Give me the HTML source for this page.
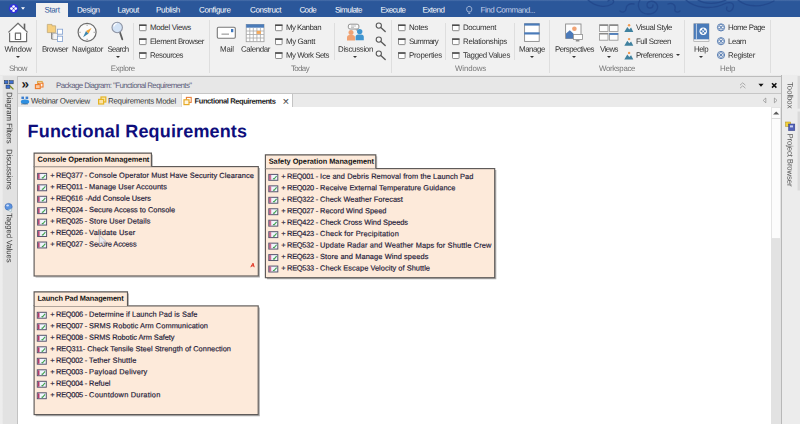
<!DOCTYPE html>
<html><head><meta charset="utf-8"><title>Functional Requirements</title>
<style>
*{box-sizing:border-box;margin:0;padding:0}
html,body{width:800px;height:424px;overflow:hidden;background:#f0f0f0;font-family:"Liberation Sans",sans-serif;}
#root{position:absolute;left:0;top:0;width:800px;height:424px;overflow:hidden;filter:blur(0.4px)}
.abs{position:absolute}
.t{position:absolute;left:0;top:0;transform-origin:0 0;white-space:nowrap;line-height:10px;height:10px}
.tab{font-size:8px;color:#fff}
.rt{font-size:7.9px;color:#333}
.gl{font-size:7.9px;color:#787878}
.hd{font-size:7.9px;color:#60607c}
.dt{font-size:7.9px;color:#3c3c3c}
.dtb{font-size:7.6px;color:#222;font-weight:bold}
.vt{font-size:7.9px;color:#3a3a3a;transform-origin:0 0}
.vr{color:#585858}
.h1{font-size:18px;font-weight:bold;color:#0e0e7c;line-height:20px;height:20px}
.pt{font-size:7.4px;font-weight:bold;color:#111}
.rq{font-size:7.4px;color:#1e1a38;-webkit-text-stroke:.18px #1e1a38}
#titlebar{left:0;top:0;width:800px;height:17px;background:linear-gradient(#4a70ab 0,#2b579a 1.6px)}
#starttab{left:36px;top:3px;width:32px;height:15px;background:#f1f1f1}
#ribbon{left:0;top:17px;width:800px;height:59px;background:linear-gradient(#f1f1f1 0,#f1f1f1 57.4px,#e6e6e6 59px)}
.sep{position:absolute;top:20px;width:1px;height:53px;background:#dedede}
.sep2{position:absolute;top:23px;width:1px;height:37px;background:#dedede}
.win{position:absolute;width:7.6px;height:6.4px;border:.9px solid #7c7c7c;border-top:1.7px solid #505050;background:#fdfdfd;border-radius:.8px}
.arr{position:absolute;width:0;height:0;border-left:2px solid transparent;border-right:2px solid transparent;border-top:2.5px solid #333}
#leftbar{left:0;top:76px;width:18px;height:348px;background:linear-gradient(90deg,#ededed 0,#ededed 2px,#e2e2e2 3.5px);border-right:1px solid #c2c2c2}
#rightbar{left:781px;top:75px;width:19px;height:349px;background:#ececec;border-left:1px solid #b8b8b8}
#dhead{left:18px;top:76px;width:763px;height:18px;background:#e7e7e7;border-top:1px solid #bcbcbc;border-bottom:1px solid #c6c6c6}
#tabrow{left:18px;top:94px;width:763px;height:13px;background:#eaeaea}
#acttab{left:181px;top:94px;width:112px;height:14px;background:#fff;border-right:1px solid #c4c4c4;border-left:1px solid #dadada}
#canvas{left:18px;top:107px;width:753px;height:317px;background:#fff}
#scroll{left:771px;top:107px;width:10px;height:317px;background:#e2e2e2}
#thumb{left:771px;top:107px;width:10px;height:132px;background:#fcfcfc;border:1px solid #e4e4e4}
</style></head><body><div id="root">
<div id="titlebar" class="abs"></div>
<div id="starttab" class="abs"></div>
<div id="ribbon" class="abs"></div>
<div id="leftbar" class="abs"></div>
<div id="rightbar" class="abs"></div>
<div id="dhead" class="abs"></div>
<div id="tabrow" class="abs"></div>
<div id="acttab" class="abs"></div>
<div id="canvas" class="abs"></div>
<div id="scroll" class="abs"></div>
<div id="thumb" class="abs"></div>
<div class="arr" style="left:15.5px;top:55.6px"></div>
<div class="arr" style="left:116px;top:55.6px"></div>
<div class="arr" style="left:353px;top:55.6px"></div>
<div class="arr" style="left:529.5px;top:55.6px"></div>
<div class="arr" style="left:572px;top:55.6px"></div>
<div class="arr" style="left:607px;top:55.6px"></div>
<div class="arr" style="left:699px;top:55.6px"></div>
<div class="arr" style="left:675.5px;top:54px"></div>
<div class="sep" style="left:36px"></div>
<div class="sep" style="left:209px"></div>
<div class="sep" style="left:390.5px"></div>
<div class="sep" style="left:549px"></div>
<div class="sep" style="left:684px"></div>
<div class="sep" style="left:770px"></div>
<div class="sep2" style="left:132.5px"></div>
<div class="sep2" style="left:333.5px"></div>
<div class="sep2" style="left:445px"></div>
<div class="sep2" style="left:513.5px"></div>
<svg class="abs" style="left:0;top:0" width="800" height="424" viewBox="0 0 800 424"><defs><g id="rq"><rect x=".4" y=".4" width="9" height="5.9" fill="#f0f5fd" stroke="#55556e" stroke-width="1"/><rect x=".9" y=".9" width="1.6" height="4.9" fill="#b23c6a"/><rect x="2.1" y=".9" width=".8" height="4.9" fill="#dc90b4"/><path d="M4.6 4.6 L5.6 5 L8.2 2" fill="none" stroke="#3fa04c" stroke-width="1.1"/></g></defs><path d="M259.3 168.1 V277 H35.6" fill="none" stroke="#6a6a6a" stroke-width="1.2" opacity=".55"/><path d="M152.3 154.6 V166.1" fill="none" stroke="#6a6a6a" stroke-width="1" opacity=".5"/><rect x="34.1" y="166.6" width="224.20000000000002" height="109.4" fill="#fdeada" stroke="#5c5856" stroke-width="1.15"/><path d="M34.1 166.6 V153.1 H151.4 V166.6" fill="#fdeada" stroke="#5c5856" stroke-width="1.15"/><use href="#rq" x="37.2" y="173.00"/><use href="#rq" x="37.2" y="184.44"/><use href="#rq" x="37.2" y="195.88"/><use href="#rq" x="37.2" y="207.32"/><use href="#rq" x="37.2" y="218.76"/><use href="#rq" x="37.2" y="230.20"/><use href="#rq" x="37.2" y="241.64"/><path d="M495.7 170.1 V278.7 H266.9" fill="none" stroke="#6a6a6a" stroke-width="1.2" opacity=".55"/><path d="M376.7 156.3 V168.1" fill="none" stroke="#6a6a6a" stroke-width="1" opacity=".5"/><rect x="265.4" y="168.6" width="229.3" height="109.1" fill="#fdeada" stroke="#5c5856" stroke-width="1.15"/><path d="M265.4 168.6 V154.8 H375.8 V168.6" fill="#fdeada" stroke="#5c5856" stroke-width="1.15"/><use href="#rq" x="268.4" y="174.00"/><use href="#rq" x="268.4" y="185.46"/><use href="#rq" x="268.4" y="196.92"/><use href="#rq" x="268.4" y="208.38"/><use href="#rq" x="268.4" y="219.84"/><use href="#rq" x="268.4" y="231.30"/><use href="#rq" x="268.4" y="242.76"/><use href="#rq" x="268.4" y="254.22"/><use href="#rq" x="268.4" y="265.68"/><path d="M259.2 307.4 V415.6 H35.6" fill="none" stroke="#6a6a6a" stroke-width="1.2" opacity=".55"/><path d="M128.4 293.4 V305.4" fill="none" stroke="#6a6a6a" stroke-width="1" opacity=".5"/><rect x="34.1" y="305.9" width="224.1" height="108.70000000000005" fill="#fdeada" stroke="#5c5856" stroke-width="1.15"/><path d="M34.1 305.9 V291.9 H127.5 V305.9" fill="#fdeada" stroke="#5c5856" stroke-width="1.15"/><use href="#rq" x="36.9" y="311.90"/><use href="#rq" x="36.9" y="323.40"/><use href="#rq" x="36.9" y="334.90"/><use href="#rq" x="36.9" y="346.40"/><use href="#rq" x="36.9" y="357.90"/><use href="#rq" x="36.9" y="369.40"/><use href="#rq" x="36.9" y="380.90"/><use href="#rq" x="36.9" y="392.40"/></svg>
<div id="t0" class="t tab" style="color:#2b569a;transform:translate(44.5px,5.60px) rotate(.04deg);letter-spacing:-0.383px">Start</div>
<div id="t1" class="t tab" style="transform:translate(77px,5.60px) rotate(.04deg);letter-spacing:-0.402px">Design</div>
<div id="t2" class="t tab" style="transform:translate(117.5px,5.60px) rotate(.04deg);letter-spacing:-0.473px">Layout</div>
<div id="t3" class="t tab" style="transform:translate(156px,5.60px) rotate(.04deg);letter-spacing:-0.322px">Publish</div>
<div id="t4" class="t tab" style="transform:translate(199px,5.60px) rotate(.04deg);letter-spacing:-0.355px">Configure</div>
<div id="t5" class="t tab" style="transform:translate(250px,5.60px) rotate(.04deg);letter-spacing:-0.360px">Construct</div>
<div id="t6" class="t tab" style="transform:translate(299.5px,5.60px) rotate(.04deg);letter-spacing:-0.658px">Code</div>
<div id="t7" class="t tab" style="transform:translate(335px,5.60px) rotate(.04deg);letter-spacing:-0.516px">Simulate</div>
<div id="t8" class="t tab" style="transform:translate(380.5px,5.60px) rotate(.04deg);letter-spacing:-0.559px">Execute</div>
<div id="t9" class="t tab" style="transform:translate(422.5px,5.60px) rotate(.04deg);letter-spacing:-0.485px">Extend</div>
<div id="t10" class="t tab" style="color:#c8d4ea;transform:translate(480.5px,5.60px) rotate(.04deg);letter-spacing:-0.458px">Find Command...</div>
<div id="t11" class="t rt" style="transform:translate(4.5px,44.80px) rotate(.04deg);letter-spacing:-0.181px">Window</div>
<div id="t12" class="t rt" style="transform:translate(42px,44.80px) rotate(.04deg);letter-spacing:-0.423px">Browser</div>
<div id="t13" class="t rt" style="transform:translate(72px,44.80px) rotate(.04deg);letter-spacing:-0.310px">Navigator</div>
<div id="t14" class="t rt" style="transform:translate(107.5px,44.80px) rotate(.04deg);letter-spacing:-0.670px">Search</div>
<div id="t15" class="t rt" style="transform:translate(220px,44.80px) rotate(.04deg);letter-spacing:-0.119px">Mail</div>
<div id="t16" class="t rt" style="transform:translate(241px,44.80px) rotate(.04deg);letter-spacing:-0.380px">Calendar</div>
<div id="t17" class="t rt" style="transform:translate(338px,44.80px) rotate(.04deg);letter-spacing:-0.316px">Discussion</div>
<div id="t18" class="t rt" style="transform:translate(519px,44.80px) rotate(.04deg);letter-spacing:-0.420px">Manage</div>
<div id="t19" class="t rt" style="transform:translate(555px,44.80px) rotate(.04deg);letter-spacing:-0.515px">Perspectives</div>
<div id="t20" class="t rt" style="transform:translate(600px,44.80px) rotate(.04deg);letter-spacing:-0.583px">Views</div>
<div id="t21" class="t rt" style="transform:translate(694px,44.80px) rotate(.04deg);letter-spacing:-0.560px">Help</div>
<div id="t22" class="t rt" style="transform:translate(150px,23.00px) rotate(.04deg);letter-spacing:-0.327px">Model Views</div>
<div id="t23" class="t rt" style="transform:translate(150px,36.90px) rotate(.04deg);letter-spacing:-0.406px">Element Browser</div>
<div id="t24" class="t rt" style="transform:translate(150px,50.80px) rotate(.04deg);letter-spacing:-0.525px">Resources</div>
<div id="t25" class="t rt" style="transform:translate(286px,23.00px) rotate(.04deg);letter-spacing:-0.548px">My Kanban</div>
<div id="t26" class="t rt" style="transform:translate(286px,36.90px) rotate(.04deg);letter-spacing:-0.378px">My Gantt</div>
<div id="t27" class="t rt" style="transform:translate(286px,50.80px) rotate(.04deg);letter-spacing:-0.498px">My Work Sets</div>
<div id="t28" class="t rt" style="transform:translate(409px,23.00px) rotate(.04deg);letter-spacing:-0.326px">Notes</div>
<div id="t29" class="t rt" style="transform:translate(409px,36.90px) rotate(.04deg);letter-spacing:-0.682px">Summary</div>
<div id="t30" class="t rt" style="transform:translate(409px,50.80px) rotate(.04deg);letter-spacing:-0.298px">Properties</div>
<div id="t31" class="t rt" style="transform:translate(463px,23.00px) rotate(.04deg);letter-spacing:-0.372px">Document</div>
<div id="t32" class="t rt" style="transform:translate(463px,36.90px) rotate(.04deg);letter-spacing:-0.260px">Relationships</div>
<div id="t33" class="t rt" style="transform:translate(463px,50.80px) rotate(.04deg);letter-spacing:-0.356px">Tagged Values</div>
<div id="t34" class="t rt" style="transform:translate(636px,23.00px) rotate(.04deg);letter-spacing:-0.425px">Visual Style</div>
<div id="t35" class="t rt" style="transform:translate(636px,36.90px) rotate(.04deg);letter-spacing:-0.448px">Full Screen</div>
<div id="t36" class="t rt" style="transform:translate(636px,50.80px) rotate(.04deg);letter-spacing:-0.505px">Preferences</div>
<div id="t37" class="t rt" style="transform:translate(728px,23.00px) rotate(.04deg);letter-spacing:-0.520px">Home Page</div>
<div id="t38" class="t rt" style="transform:translate(728px,36.90px) rotate(.04deg);letter-spacing:-0.439px">Learn</div>
<div id="t39" class="t rt" style="transform:translate(728px,50.80px) rotate(.04deg);letter-spacing:-0.300px">Register</div>
<div id="t40" class="t gl" style="transform:translate(9px,63.90px) rotate(.04deg);letter-spacing:-0.439px">Show</div>
<div id="t41" class="t gl" style="transform:translate(110.8px,63.90px) rotate(.04deg);letter-spacing:-0.396px">Explore</div>
<div id="t42" class="t gl" style="transform:translate(291px,63.90px) rotate(.04deg);letter-spacing:-0.614px">Today</div>
<div id="t43" class="t gl" style="transform:translate(455px,63.90px) rotate(.04deg);letter-spacing:-0.146px">Windows</div>
<div id="t44" class="t gl" style="transform:translate(599px,63.90px) rotate(.04deg);letter-spacing:-0.370px">Workspace</div>
<div id="t45" class="t gl" style="transform:translate(720px,63.90px) rotate(.04deg);letter-spacing:-0.310px">Help</div>
<div id="t46" class="t hd" style="font-size:13.5px;color:#1a1a1a;font-weight:bold;transform:translate(21.6px,79.40px) rotate(.04deg);letter-spacing:-0.526px">»</div>
<div id="t47" class="t hd" style="transform:translate(56px,80.90px) rotate(.04deg);letter-spacing:-0.594px">Package Diagram: &quot;Functional Requirements&quot;</div>
<div id="t48" class="t dt" style="transform:translate(31px,96.60px) rotate(.04deg);letter-spacing:-0.333px">Webinar Overview</div>
<div id="t49" class="t dt" style="transform:translate(108px,96.60px) rotate(.04deg);letter-spacing:-0.268px">Requirements Model</div>
<div id="t50" class="t dtb" style="transform:translate(194.5px,96.60px) rotate(.04deg);letter-spacing:-0.441px">Functional Requirements</div>
<div id="t51" class="t dt" style="font-size:11.5px;color:#4c4c4c;transform:translate(282.6px,96.20px) rotate(.04deg);letter-spacing:-0.327px">×</div>
<div id="t52" class="t h1" style="transform:translate(27.6px,121.20px) rotate(.04deg);letter-spacing:0.155px">Functional Requirements</div>
<div id="t53" class="t pt" style="transform:translate(37.4px,154.80px) rotate(.04deg);letter-spacing:-0.052px">Console Operation Management</div>
<div id="t54" class="t rq" style="transform:translate(50.2px,170.80px) rotate(.04deg);letter-spacing:-0.244px">+ REQ377 -</div>
<div id="t55" class="t rq" style="transform:translate(89.1px,170.80px) rotate(.04deg);letter-spacing:0.104px">Console Operator Must Have Security Clearance</div>
<div id="t56" class="t rq" style="transform:translate(50.2px,182.24px) rotate(.04deg);letter-spacing:-0.189px">+ REQ011 -</div>
<div id="t57" class="t rq" style="transform:translate(89.1px,182.24px) rotate(.04deg);letter-spacing:0.074px">Manage User Accounts</div>
<div id="t58" class="t rq" style="transform:translate(50.2px,193.68px) rotate(.04deg);letter-spacing:-0.303px">+ REQ616</div>
<div id="t59" class="t rq" style="transform:translate(85.2px,193.68px) rotate(.04deg);letter-spacing:-0.019px">-Add Console Users</div>
<div id="t60" class="t rq" style="transform:translate(50.2px,205.12px) rotate(.04deg);letter-spacing:-0.244px">+ REQ024 -</div>
<div id="t61" class="t rq" style="transform:translate(89.1px,205.12px) rotate(.04deg);letter-spacing:-0.016px">Secure Access to Console</div>
<div id="t62" class="t rq" style="transform:translate(50.2px,216.56px) rotate(.04deg);letter-spacing:-0.244px">+ REQ025 -</div>
<div id="t63" class="t rq" style="transform:translate(89.1px,216.56px) rotate(.04deg);letter-spacing:0.079px">Store User Details</div>
<div id="t64" class="t rq" style="transform:translate(50.2px,228.00px) rotate(.04deg);letter-spacing:-0.244px">+ REQ026 -</div>
<div id="t65" class="t rq" style="transform:translate(89.1px,228.00px) rotate(.04deg);letter-spacing:0.197px">Validate User</div>
<div id="t66" class="t rq" style="transform:translate(50.2px,239.44px) rotate(.04deg);letter-spacing:-0.244px">+ REQ027 -</div>
<div id="t67" class="t rq" style="transform:translate(89.1px,239.44px) rotate(.04deg);letter-spacing:-0.115px">Secure Access</div>
<div id="t68" class="t pt" style="transform:translate(268.7px,156.80px) rotate(.04deg);letter-spacing:-0.040px">Safety Operation Management</div>
<div id="t69" class="t rq" style="transform:translate(281.2px,171.80px) rotate(.04deg);letter-spacing:-0.244px">+ REQ001 -</div>
<div id="t70" class="t rq" style="transform:translate(320.09999999999997px,171.80px) rotate(.04deg);letter-spacing:0.092px">Ice and Debris Removal from the Launch Pad</div>
<div id="t71" class="t rq" style="transform:translate(281.2px,183.26px) rotate(.04deg);letter-spacing:-0.244px">+ REQ020 -</div>
<div id="t72" class="t rq" style="transform:translate(320.09999999999997px,183.26px) rotate(.04deg);letter-spacing:0.066px">Receive External Temperature Guidance</div>
<div id="t73" class="t rq" style="transform:translate(281.2px,194.72px) rotate(.04deg);letter-spacing:-0.244px">+ REQ322 -</div>
<div id="t74" class="t rq" style="transform:translate(320.09999999999997px,194.72px) rotate(.04deg);letter-spacing:0.058px">Check Weather Forecast</div>
<div id="t75" class="t rq" style="transform:translate(281.2px,206.18px) rotate(.04deg);letter-spacing:-0.244px">+ REQ027 -</div>
<div id="t76" class="t rq" style="transform:translate(320.09999999999997px,206.18px) rotate(.04deg);letter-spacing:0.015px">Record Wind Speed</div>
<div id="t77" class="t rq" style="transform:translate(281.2px,217.64px) rotate(.04deg);letter-spacing:-0.244px">+ REQ422 -</div>
<div id="t78" class="t rq" style="transform:translate(320.09999999999997px,217.64px) rotate(.04deg);letter-spacing:-0.018px">Check Cross Wind Speeds</div>
<div id="t79" class="t rq" style="transform:translate(281.2px,229.10px) rotate(.04deg);letter-spacing:-0.244px">+ REQ423 -</div>
<div id="t80" class="t rq" style="transform:translate(320.09999999999997px,229.10px) rotate(.04deg);letter-spacing:0.197px">Check for Precipitation</div>
<div id="t81" class="t rq" style="transform:translate(281.2px,240.56px) rotate(.04deg);letter-spacing:-0.244px">+ REQ532 -</div>
<div id="t82" class="t rq" style="transform:translate(320.09999999999997px,240.56px) rotate(.04deg);letter-spacing:0.130px">Update Radar and Weather Maps for Shuttle Crew</div>
<div id="t83" class="t rq" style="transform:translate(281.2px,252.02px) rotate(.04deg);letter-spacing:-0.244px">+ REQ623 -</div>
<div id="t84" class="t rq" style="transform:translate(320.09999999999997px,252.02px) rotate(.04deg);letter-spacing:0.100px">Store and Manage Wind speeds</div>
<div id="t85" class="t rq" style="transform:translate(281.2px,263.48px) rotate(.04deg);letter-spacing:-0.244px">+ REQ533 -</div>
<div id="t86" class="t rq" style="transform:translate(320.09999999999997px,263.48px) rotate(.04deg);letter-spacing:0.045px">Check Escape Velocity of Shuttle</div>
<div id="t87" class="t pt" style="transform:translate(37.4px,293.80px) rotate(.04deg);letter-spacing:-0.140px">Launch Pad Management</div>
<div id="t88" class="t rq" style="transform:translate(50.2px,309.70px) rotate(.04deg);letter-spacing:-0.244px">+ REQ006 -</div>
<div id="t89" class="t rq" style="transform:translate(89.1px,309.70px) rotate(.04deg);letter-spacing:0.077px">Determine if Launch Pad is Safe</div>
<div id="t90" class="t rq" style="transform:translate(50.2px,321.20px) rotate(.04deg);letter-spacing:-0.244px">+ REQ007 -</div>
<div id="t91" class="t rq" style="transform:translate(89.1px,321.20px) rotate(.04deg);letter-spacing:0.061px">SRMS Robotic Arm Communication</div>
<div id="t92" class="t rq" style="transform:translate(50.2px,332.70px) rotate(.04deg);letter-spacing:-0.244px">+ REQ008 -</div>
<div id="t93" class="t rq" style="transform:translate(89.1px,332.70px) rotate(.04deg);letter-spacing:-0.056px">SRMS Robotic Arm Safety</div>
<div id="t94" class="t rq" style="transform:translate(50.2px,344.20px) rotate(.04deg);letter-spacing:-0.205px">+ REQ311-</div>
<div id="t95" class="t rq" style="transform:translate(87.2px,344.20px) rotate(.04deg);letter-spacing:0.032px">Check Tensile Steel Strength of Connection</div>
<div id="t96" class="t rq" style="transform:translate(50.2px,355.70px) rotate(.04deg);letter-spacing:-0.244px">+ REQ002 -</div>
<div id="t97" class="t rq" style="transform:translate(89.1px,355.70px) rotate(.04deg);letter-spacing:0.127px">Tether Shuttle</div>
<div id="t98" class="t rq" style="transform:translate(50.2px,367.20px) rotate(.04deg);letter-spacing:-0.244px">+ REQ003 -</div>
<div id="t99" class="t rq" style="transform:translate(89.1px,367.20px) rotate(.04deg);letter-spacing:0.183px">Payload Delivery</div>
<div id="t100" class="t rq" style="transform:translate(50.2px,378.70px) rotate(.04deg);letter-spacing:-0.244px">+ REQ004 -</div>
<div id="t101" class="t rq" style="transform:translate(89.1px,378.70px) rotate(.04deg);letter-spacing:0.003px">Refuel</div>
<div id="t102" class="t rq" style="transform:translate(50.2px,390.20px) rotate(.04deg);letter-spacing:-0.244px">+ REQ005 -</div>
<div id="t103" class="t rq" style="transform:translate(89.1px,390.20px) rotate(.04deg);letter-spacing:0.222px">Countdown Duration</div>
<div id="v0" class="t vt" style="transform:translate(13.7px,92px) rotate(90.04deg);letter-spacing:-0.134px">Diagram Filters</div>
<div id="v1" class="t vt" style="transform:translate(13.7px,149px) rotate(90.04deg);letter-spacing:-0.147px">Discussions</div>
<div id="v2" class="t vt" style="transform:translate(13.7px,213px) rotate(90.04deg);letter-spacing:-0.164px">Tagged Values</div>
<div id="v3" class="t vt vr" style="transform:translate(794.4px,82px) rotate(90.04deg);letter-spacing:-0.101px">Toolbox</div>
<div id="v4" class="t vt vr" style="transform:translate(794.4px,133.5px) rotate(90.04deg);letter-spacing:-0.181px">Project Browser</div>
<svg class="abs" style="left:0;top:0" width="800" height="80" viewBox="0 0 800 80"><rect x="139.5" y="25.3" width="6.6" height="5.4" rx=".6" fill="#fdfdfd" stroke="#808080" stroke-width=".9"/><path d="M139 25.2 h7.6" stroke="#4c4c4c" stroke-width="1.6"/><rect x="139.5" y="39.2" width="6.6" height="5.4" rx=".6" fill="#fdfdfd" stroke="#808080" stroke-width=".9"/><path d="M139 39.1 h7.6" stroke="#4c4c4c" stroke-width="1.6"/><rect x="139.5" y="53.1" width="6.6" height="5.4" rx=".6" fill="#fdfdfd" stroke="#808080" stroke-width=".9"/><path d="M139 53.0 h7.6" stroke="#4c4c4c" stroke-width="1.6"/><rect x="275.5" y="25.3" width="6.6" height="5.4" rx=".6" fill="#fdfdfd" stroke="#808080" stroke-width=".9"/><path d="M275 25.2 h7.6" stroke="#4c4c4c" stroke-width="1.6"/><rect x="275.5" y="39.2" width="6.6" height="5.4" rx=".6" fill="#fdfdfd" stroke="#808080" stroke-width=".9"/><path d="M275 39.1 h7.6" stroke="#4c4c4c" stroke-width="1.6"/><rect x="275.5" y="53.1" width="6.6" height="5.4" rx=".6" fill="#fdfdfd" stroke="#808080" stroke-width=".9"/><path d="M275 53.0 h7.6" stroke="#4c4c4c" stroke-width="1.6"/><rect x="398.5" y="25.3" width="6.6" height="5.4" rx=".6" fill="#fdfdfd" stroke="#808080" stroke-width=".9"/><path d="M398 25.2 h7.6" stroke="#4c4c4c" stroke-width="1.6"/><rect x="398.5" y="39.2" width="6.6" height="5.4" rx=".6" fill="#fdfdfd" stroke="#808080" stroke-width=".9"/><path d="M398 39.1 h7.6" stroke="#4c4c4c" stroke-width="1.6"/><rect x="398.5" y="53.1" width="6.6" height="5.4" rx=".6" fill="#fdfdfd" stroke="#808080" stroke-width=".9"/><path d="M398 53.0 h7.6" stroke="#4c4c4c" stroke-width="1.6"/><rect x="452.5" y="25.3" width="6.6" height="5.4" rx=".6" fill="#fdfdfd" stroke="#808080" stroke-width=".9"/><path d="M452 25.2 h7.6" stroke="#4c4c4c" stroke-width="1.6"/><rect x="452.5" y="39.2" width="6.6" height="5.4" rx=".6" fill="#fdfdfd" stroke="#808080" stroke-width=".9"/><path d="M452 39.1 h7.6" stroke="#4c4c4c" stroke-width="1.6"/><rect x="452.5" y="53.1" width="6.6" height="5.4" rx=".6" fill="#fdfdfd" stroke="#808080" stroke-width=".9"/><path d="M452 53.0 h7.6" stroke="#4c4c4c" stroke-width="1.6"/></svg>
<svg class="abs" style="left:0;top:0" width="800" height="424" viewBox="0 0 800 424">
<defs>
<g id="ea" transform="scale(.9)"><circle r="4" fill="#fafafa" stroke="#5b7fb2" stroke-width="1.1"/><circle cx="0" cy="-1.9" r="1.5" fill="none" stroke="#5b7fb2" stroke-width=".8"/><circle cx="1.9" cy="0" r="1.5" fill="none" stroke="#5b7fb2" stroke-width=".8"/><circle cx="0" cy="1.9" r="1.5" fill="none" stroke="#5b7fb2" stroke-width=".8"/><circle cx="-1.9" cy="0" r="1.5" fill="none" stroke="#5b7fb2" stroke-width=".8"/></g>
<g id="mag"><circle cx="0" cy="0" r="2.6" fill="#f6f6f6" stroke="#5a5a5a" stroke-width="1.1"/><path d="M2 2 L6.4 6" stroke="#5a5a5a" stroke-width="1.4" stroke-linecap="round"/></g>
<g id="mtn"><path d="M0 8 L3 3 L5 5.5 L6.8 3.6 L9 8 Z" fill="#3f819f"/><circle cx="4.8" cy="1.3" r="1.2" fill="#ef9a52"/></g>
<g id="pk"><rect x="2.8" y=".4" width="4.6" height="4.4" fill="#f6f3d6" stroke="#d9a23a" stroke-width=".9"/><rect x="3.6" y="2.2" width="4.6" height="3.8" fill="#fff4e8" stroke="#ee7a2a" stroke-width="1.1"/><rect x=".6" y="3.6" width="4.8" height="4" fill="#f9c9a0" stroke="#ee7a2a" stroke-width="1.1"/></g>
<g id="pky"><rect x="3" y=".4" width="4.8" height="5" fill="#fbe9b0" stroke="#e4b424" stroke-width="1.2"/><rect x=".6" y="2.8" width="5" height="4.6" fill="#fbe2a8" stroke="#e4b424" stroke-width="1.2"/></g>
<g id="pkm"><rect x="3" y=".4" width="4.8" height="5" fill="#fff" stroke="#e8803a" stroke-width="1.1"/><rect x=".6" y="2.8" width="5" height="4.8" fill="#fff6e0" stroke="#e6aa28" stroke-width="1.2"/></g>
</defs>
<!-- title swirls -->
<g fill="none" stroke="#22468a" stroke-width="1.3" opacity=".8" stroke-linecap="round">
<path d="M588 0 C596 7 606 8 612 4 C616 1 612 -2 608 1"/>
<path d="M620 11 C622 13 626 12 626 9 C626 5 630 3 634 4"/>
<path d="M640 0 C636 6 640 14 648 14 C656 14 660 8 656 3 C653 0 647 1 647 5 C647 9 653 9 653 5"/>
<path d="M668 4 C672 2 676 5 675 9 C674 12 678 13 680 11"/>
<path d="M686 0 C694 8 712 10 724 4 C730 1 735 3 733 8 C731 13 725 12 727 7"/>
<path d="M698 0 C704 4 716 5 726 0"/>
<path d="M738 0 C746 7 762 8 774 1"/>
</g>
<!-- app logo -->
<g transform="translate(13.6 8.6)"><circle r="4.7" fill="#3232dc"/><circle cx="0" cy="-2.1" r="1.35" fill="#fff"/><circle cx="2.1" cy="0" r="1.35" fill="#fff"/><circle cx="0" cy="2.1" r="1.35" fill="#fff"/><circle cx="-2.1" cy="0" r="1.35" fill="#fff"/></g>
<path d="M21 7.3 h4 l-2 2.4 z" fill="#fff"/>
<!-- bulb -->
<g fill="none" stroke="#b9c6e2" stroke-width=".9"><path d="M468 12 c-2.2 -2 -1.6 -5.6 1.2 -5.6 c2.8 0 3.4 3.6 1.2 5.6 z"/><path d="M468.3 13.4 h1.9"/></g>
<!-- house -->
<g stroke="#6e6e6e" stroke-width="1.2" fill="#fff" stroke-linejoin="round">
<path d="M24.5 23.6 V30" stroke="#606060" stroke-width="1.6"/>
<path d="M9.6 32.6 V41.6 H26.6 V32.6"/>
<path d="M8.4 32.4 L18 23.2 L27.6 32.4" fill="#fff"/>
<rect x="15.4" y="33.2" width="5.2" height="6.3"/>
</g>
<!-- browser -->
<g>
<path d="M51.5 32 V39 H57 M51.5 34 H57" fill="none" stroke="#8a8a8a" stroke-width="1"/>
<path d="M47.3 25.8 V24.4 H52 V25.8 H55.6 V32.6 H47.3 Z" fill="#f6cf7e" stroke="#b9a070" stroke-width=".7"/>
<rect x="52.8" y="33.2" width="5" height="6.4" fill="#f4f4f4" stroke="#a0a0a0" stroke-width=".7"/>
<rect x="57.4" y="29.2" width="5.2" height="5" fill="#fff" stroke="#7f9fd0" stroke-width=".8"/>
<rect x="57.4" y="36.2" width="5.2" height="5.2" fill="#fff" stroke="#7f9fd0" stroke-width=".8"/>
</g>
<!-- navigator -->
<g>
<circle cx="87.1" cy="32.3" r="9" fill="#fafafa" stroke="#6c6c6c" stroke-width="1.2"/>
<path d="M83.1 37.2 L86 31 L88.6 33.4 Z" fill="#3d86ad"/>
<path d="M91.5 28 L86 31 L88.6 33.4 Z" fill="#f2a53c"/>
<path d="M87.1 24.6 v1.2 M87.1 38.8 v1.2 M79.4 32.3 h1.2 M93.6 32.3 h1.2" stroke="#777" stroke-width=".8"/>
</g>
<!-- search -->
<g>
<path d="M120 32.5 L122.3 39.3" stroke="#5e5e5e" stroke-width="1.8" stroke-linecap="round"/>
<circle cx="117.2" cy="27.5" r="5.2" fill="#d3e3f6" stroke="#8d93a3" stroke-width="1.1"/>
<path d="M113.8 26.5 a3.6 3.6 0 0 1 3 -3" stroke="#fff" stroke-width="1.2" fill="none"/>
</g>
<!-- mail -->
<g>
<rect x="217.3" y="27.2" width="18" height="11" rx="1.2" fill="#fff" stroke="#777" stroke-width="1.1"/>
<rect x="231" y="29" width="2.3" height="3.2" fill="#3f77bd"/>
<rect x="221.5" y="33.4" width="7.5" height="1.6" fill="#b5b5b5"/>
</g>
<!-- calendar -->
<g>
<rect x="246.2" y="24.5" width="17.8" height="17.2" fill="#fff" stroke="#9a9a9a" stroke-width=".8"/>
<rect x="246.2" y="24.3" width="17.8" height="3.4" fill="#4a7bb9"/>
<path d="M246.2 31 H264 M246.2 34.5 H264 M246.2 38 H264 M249.8 27.7 V41.7 M253.3 27.7 V41.7 M256.9 27.7 V41.7 M260.4 27.7 V41.7" stroke="#a8a8a8" stroke-width=".8"/>
<rect x="256.7" y="30.9" width="4.2" height="3" fill="#f5a95a"/>
</g>
<!-- discussion -->
<g>
<rect x="348.3" y="24.2" width="10.6" height="4.8" rx="1.8" fill="#fbfbfb" stroke="#7a7a7a" stroke-width=".8"/>
<path d="M356 29 l1 1.6 l.8 -1.6" fill="#fbfbfb" stroke="#7a7a7a" stroke-width=".7"/>
<path d="M351 26 h5 M351 27.4 h3" stroke="#999" stroke-width=".6"/>
<circle cx="351" cy="32.6" r="2.5" fill="#f0a273"/>
<path d="M347 40.6 V37.5 q0 -2.5 2.5 -2.5 h3 q2.5 0 2.5 2.5 V40.6 Z" fill="#f0a273"/>
<circle cx="359.7" cy="31.6" r="2.7" fill="#3f95d0"/>
<path d="M355.6 40.2 V37 q0 -2.6 2.6 -2.6 h3 q2.6 0 2.6 2.6 V40.2 Z" fill="#3f95d0"/>
</g>
<use href="#mag" x="378.8" y="25.6"/><use href="#mag" x="378.8" y="39.6"/><use href="#mag" x="378.8" y="53.6"/>
<!-- manage -->
<g>
<rect x="524.6" y="23.8" width="14.6" height="17.6" fill="#fff" stroke="#8a8a8a" stroke-width=".9"/>
<rect x="524.2" y="23.4" width="15.4" height="2.2" fill="#4a7bb9"/>
<rect x="524.2" y="32.3" width="15.4" height="2.2" fill="#4a7bb9"/>
</g>
<!-- perspectives -->
<g>
<rect x="565.6" y="24" width="15.4" height="14.4" fill="#fdfdfd" stroke="#8c8c8c" stroke-width=".9"/>
<path d="M566 38.4 V33.6 L569.8 30.2 L573.4 33.6 V38.4 Z" fill="#4b79b8"/>
<circle cx="574.4" cy="28.8" r="2.3" fill="#f1a475"/>
<rect x="573.4" y="34.4" width="9" height="5" fill="#fff" stroke="#8c8c8c" stroke-width=".8"/>
<path d="M575.8 40.8 h3.6" stroke="#777" stroke-width="1.2"/>
</g>
<!-- views -->
<g fill="#fbfbfb" stroke="#929292" stroke-width=".8">
<rect x="599.6" y="24.8" width="8.4" height="6.8"/><rect x="609.6" y="24.8" width="8.4" height="6.8"/>
<rect x="599.6" y="33.4" width="8.4" height="6.8"/><rect x="609.6" y="33.4" width="8.4" height="6.8"/>
<path d="M599.6 25.2 h8.4 M609.6 25.2 h8.4 M599.6 33.8 h8.4" stroke="#8a8a8a" stroke-width="1.4"/>
<path d="M609.4 34 h8.8" stroke="#4a7bb9" stroke-width="1.8"/>
</g>
<use href="#mtn" x="624.3" y="24"/><use href="#mtn" x="624.3" y="37.8"/><use href="#mtn" x="624.3" y="51.6"/>
<!-- help book -->
<g>
<rect x="693.8" y="23.7" width="15.2" height="17.6" fill="#f4f4f4" stroke="#9a9a9a" stroke-width=".6"/>
<rect x="693.8" y="23.7" width="15.2" height="15.6" fill="#4a7bb9"/>
<path d="M696.4 23.7 V39.3" stroke="#dfe7f3" stroke-width=".8"/>
<g transform="translate(703.2 31.3)"><circle r="3.7" fill="#fff"/><circle cx="0" cy="-1.7" r="1.1" fill="#4a7bb9"/><circle cx="1.7" cy="0" r="1.1" fill="#4a7bb9"/><circle cx="0" cy="1.7" r="1.1" fill="#4a7bb9"/><circle cx="-1.7" cy="0" r="1.1" fill="#4a7bb9"/></g>
</g>
<use href="#ea" x="721" y="27.4"/><use href="#ea" x="721" y="41.2"/><use href="#ea" x="721" y="55"/>
<!-- header icons -->
<use href="#pk" x="34.8" y="81"/>
<use href="#pky" x="98" y="96.6"/>
<use href="#pkm" x="183.4" y="97"/>
<g><ellipse cx="25" cy="101.8" rx="4.2" ry="2.4" fill="#2f8fe0"/><rect x="21.4" y="96.6" width="2.6" height="2.4" fill="#3d7fd0"/><rect x="25.6" y="96.6" width="2.6" height="2.4" fill="#3d7fd0"/><path d="M21 104 h7" stroke="#456" stroke-width=".6"/></g>
<path d="M740 85.2 l2.7 -2.4 l2.7 2.4 M740 88.2 l2.7 -2.4 l2.7 2.4" fill="none" stroke="#a4a4a4" stroke-width=".9"/>
<rect x="797.6" y="76" width="2.4" height="32.6" fill="#dadada"/><rect x="797.6" y="111.5" width="2.4" height="79" fill="#dadada"/>
<path d="M758.4 83.8 h5.2 l-2.6 3 z" fill="#111"/>
<path d="M772 83.2 l4.4 4.4 M776.4 83.2 l-4.4 4.4" stroke="#111" stroke-width="1.5"/>
<path d="M765.8 98 v4.8 l-2.6 -2.4 z M774.4 98 v4.8 l2.6 -2.4 z" fill="#f4f4f4" stroke="#8a8a8a" stroke-width=".7"/>
<!-- scrollbar arrow -->
<path d="M773.1 114.6 h6.2 l-3.1 -3.1 z" fill="#5a5a5a"/>
<path d="M771.5 118.5 h9.5" stroke="#dcdcdc" stroke-width="1"/>
<!-- left bar icons -->
<g><rect x="4.4" y="80.6" width="3.6" height="3.2" fill="#3d6fd0" stroke="#234" stroke-width=".5"/><rect x="9.6" y="80.6" width="3.6" height="3.2" fill="#3d6fd0" stroke="#234" stroke-width=".5"/><rect x="6" y="85" width="4" height="3.4" fill="#3d6fd0" stroke="#234" stroke-width=".5"/><path d="M10 86 l3.4 3.4" stroke="#7a8a20" stroke-width="1.3"/></g>
<g><ellipse cx="8.6" cy="206.8" rx="3.6" ry="3.4" fill="#5b93e0" stroke="#3a67b0" stroke-width=".6"/><path d="M8 210 l3 2 l1 -3.4 z" fill="#e8eefc" stroke="#8aa" stroke-width=".5"/><ellipse cx="7.6" cy="205.6" rx="1.4" ry="1" fill="#cfe0fa"/></g>
<!-- right bar icon -->
<g><rect x="785.6" y="122" width="5" height="4.4" fill="#f4d23c" stroke="#a88a18" stroke-width=".5"/><rect x="788.6" y="124" width="6.2" height="6.6" fill="#5060b8" stroke="#303a80" stroke-width=".5"/><rect x="790" y="125.4" width="3" height="2" fill="#c8d0f0"/></g>
<!-- red A -->
<path d="M250.8 267.2 L253 263.2 L254.2 267.2 M251.6 265.8 h2.2" fill="none" stroke="#e03222" stroke-width="1"/>
<!-- cursor -->
<path d="M99.3 235 V244 L101.6 242.2 L103.4 245.4 L104.6 244.8 L103 241.8 L106.2 241.6 Z" fill="#ececf2" stroke="#b4b4c0" stroke-width=".7"/>
</svg>

</div></body></html>
